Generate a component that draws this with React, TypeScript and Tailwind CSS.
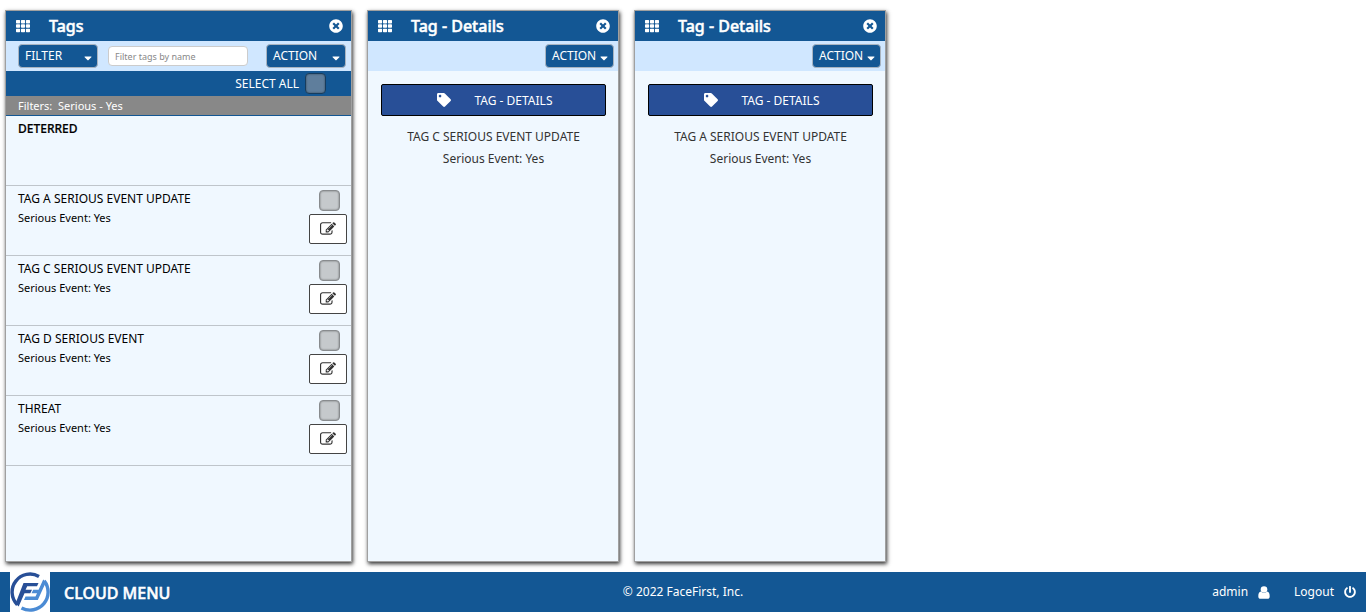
import type { ReactNode } from "react";
import { FaCaretDown, FaPowerOff, FaTag, FaTh, FaTimesCircle } from "react-icons/fa";

type Tag = { name: string; info?: string; strong?: boolean };

const tags: Tag[] = [
  { name: "DETERRED", strong: true },
  { name: "TAG A SERIOUS EVENT UPDATE", info: "Serious Event: Yes" },
  { name: "TAG C SERIOUS EVENT UPDATE", info: "Serious Event: Yes" },
  { name: "TAG D SERIOUS EVENT", info: "Serious Event: Yes" },
  { name: "THREAT", info: "Serious Event: Yes" },
];

function Panel({ title, width, children }: { title: string; width: string; children: ReactNode }) {
  return (
    <section
      className={`flex shrink-0 flex-col border border-[#a0a0a0] bg-[#f0f8ff] shadow-[1px_2px_4px_0px_rgba(0,0,0,0.8)] ${width}`}
    >
      <header className="flex h-[30px] shrink-0 items-center bg-[#135794] pr-2 pl-2.5 text-white">
        <button type="button" aria-label="Move panel">
          <FaTh className="size-[14px]" />
        </button>
        <h2 className="ml-[19px] flex-1 text-base font-medium [-webkit-text-stroke:0.5px]">{title}</h2>
        <button type="button" aria-label={`Close ${title}`}>
          <FaTimesCircle className="size-[14px]" />
        </button>
      </header>
      {children}
    </section>
  );
}

function MenuButton({ label, width }: { label: string; width: string }) {
  return (
    <button
      type="button"
      className={`flex h-6 shrink-0 items-center justify-between rounded-[4px] border border-[#a9b4c0] bg-[#135794] pr-[5px] pl-1.5 text-xs text-white ${width}`}
    >
      {label}
      <FaCaretDown className="mt-1 h-3 w-2" />
    </button>
  );
}

function CheckBox({ label, tone }: { label: string; tone: string }) {
  return (
    <input
      type="checkbox"
      aria-label={label}
      className={`size-[21px] shrink-0 appearance-none rounded-[4px] border shadow-[inset_0_0_2px_rgba(0,0,0,0.5)] ${tone}`}
    />
  );
}

function EditIcon() {
  return (
    <svg viewBox="0 0 1792 1792" className="size-4" fill="currentColor" aria-hidden="true">
      <path d="M888 1184l116-116-152-152-116 116v56h96v96h56zm440-720q-16-16-33 1l-350 350q-17 17-1 33t33-1l350-350q17-17 1-33zm80 594v190q0 119-84.500 203.500t-203.500 84.500h-832q-119 0-203.500-84.500t-84.500-203.500v-832q0-119 84.500-203.500t203.500-84.500h832q63 0 117 25 15 7 18 23 3 17-9 29l-49 49q-14 14-32 8-23-6-45-6h-832q-66 0-113 47t-47 113v832q0 66 47 113t113 47h832q66 0 113-47t47-113v-126q0-13 9-22l64-64q15-15 35-7t20 29zm-96-738l288 288-672 672h-288v-288zm444 132l-92 92-288-288 92-92q28-28 68-28t68 28l152 152q28 28 28 68t-28 68z" />
    </svg>
  );
}

function TagRow({ tag }: { tag: Tag }) {
  return (
    <li className="flex h-[70px] justify-between border-b border-[#bfc5cb] pr-1 pl-3 text-black">
      <div className="pt-1">
        <p className={`text-xs leading-[18px] ${tag.strong ? "font-medium [-webkit-text-stroke:0.2px]" : ""}`}>
          {tag.name}
        </p>
        {tag.info && <p className="mt-px text-[11px] leading-[18px]">{tag.info}</p>}
      </div>
      {tag.info && (
        <div className="flex flex-col items-center gap-[3px] pt-1">
          <CheckBox label={`Select ${tag.name}`} tone="ml-[3px] border-[#888b8e] bg-[#c5c9cc]" />
          <button
            type="button"
            aria-label={`Edit ${tag.name}`}
            className="flex h-[30px] w-[38px] items-center justify-center rounded-[2px] border border-[#444] bg-white text-[#333]"
          >
            <EditIcon />
          </button>
        </div>
      )}
    </li>
  );
}

function DetailsPanel({ name }: { name: string }) {
  return (
    <Panel title="Tag - Details" width="w-[252px]">
      <div className="flex h-[30px] items-center justify-end bg-[#d0e7ff] pr-1">
        <MenuButton label="ACTION" width="w-[69px]" />
      </div>
      <div className="pt-[13px] pr-3 pl-[13px] text-center text-xs text-[#333]">
        <button
          type="button"
          className="flex h-8 w-full items-center justify-center gap-6 rounded-[2px] border border-black bg-[#284f97] pl-0.5 text-white"
        >
          <FaTag className="size-[14px] text-white" />
          <span className="pt-0.5">TAG - DETAILS</span>
        </button>
        <p className="mt-2.5 leading-[22px]">{name}</p>
        <p className="leading-[22px]">Serious Event: Yes</p>
      </div>
    </Panel>
  );
}

function Logo() {
  return (
    <svg viewBox="0 0 40 40" className="size-10 bg-white" role="img" aria-label="FaceFirst">
      <g fill="none" strokeWidth="3.4">
        <path d="M7.300 32.700A18 18 0 0 1 29 4.400" stroke="#284f97" />
        <path d="M34.200 8.900A18 18 0 0 1 11.500 35.900" stroke="#4b8bd4" />
      </g>
      <path d="M13.500 11H28.500L27 14.300H17.200L15.600 17.700H22L20.300 21.200H14.500L8.700 34.500L5.500 31.500Z" fill="#284f97" />
      <path d="M33.200 7.500L36 10L27.800 28H14L15.500 24.500H25.500L27 21.200H21.500L23.200 17.700H28.600Z" fill="#4b8bd4" />
    </svg>
  );
}

function UserIcon() {
  return (
    <svg viewBox="0 0 12 13" className="h-[13px] w-3" fill="currentColor" aria-hidden="true">
      <path d="M3 5.500C1 5.800.3 7.600.3 10.200.3 12 1.200 12.800 2.500 12.800h7c1.300 0 2.200-.8 2.200-2.600C11.700 7.600 11 5.800 9 5.500 8.300 6.400 7.200 7 6 7S3.700 6.400 3 5.500Z" />
      <circle cx="6" cy="3.500" r="3.300" />
    </svg>
  );
}

export default function App() {
  return (
    <div className="flex min-h-screen flex-col bg-white font-['Noto_Sans',sans-serif] text-xs">
      <main className="flex flex-1 gap-[15px] px-[5px] py-2.5">
        <Panel title="Tags" width="w-[347px]">
          <div className="flex h-[30px] items-center bg-[#d0e7ff] pr-[5px] pl-3">
            <MenuButton label="FILTER" width="w-20" />
            <input
              type="text"
              aria-label="Filter tags by name"
              placeholder="Filter tags by name"
              className="mr-[18px] ml-2.5 h-5 min-w-0 flex-1 rounded-[4px] border border-[#ccc] bg-white px-1.5 text-[9px] placeholder:text-[#888]"
            />
            <MenuButton label="ACTION" width="w-20" />
          </div>
          <div className="flex h-[25px] items-center justify-end gap-1.5 bg-[#135794] pr-[25px] text-white">
            <span>SELECT ALL</span>
            <CheckBox label="Select all" tone="border-[#163c5e] bg-[#5f7e9c]" />
          </div>
          <p className="h-5 border-b border-[#135794] bg-[#888] pl-3 text-[11px] leading-[19px] whitespace-pre text-white">
            {"Filters:  Serious - Yes"}
          </p>
          <ul>
            {tags.map((tag) => (
              <TagRow key={tag.name} tag={tag} />
            ))}
          </ul>
        </Panel>
        <DetailsPanel name="TAG C SERIOUS EVENT UPDATE" />
        <DetailsPanel name="TAG A SERIOUS EVENT UPDATE" />
      </main>
      <footer className="grid h-10 grid-cols-3 items-center bg-[#135794] text-white">
        <div className="flex items-center gap-3.5 pl-2.5">
          <Logo />
          <button type="button" className="pt-0.5 text-base font-medium [-webkit-text-stroke:0.5px]">
            CLOUD MENU
          </button>
        </div>
        <p className="text-center">© 2022 FaceFirst, Inc.</p>
        <div className="flex items-center justify-end gap-6 pr-2.5">
          <a href="#admin" className="flex items-center gap-2.5">
            admin <UserIcon />
          </a>
          <a href="#logout" className="flex items-center gap-2.5">
            Logout <FaPowerOff className="size-3" />
          </a>
        </div>
      </footer>
    </div>
  );
}
